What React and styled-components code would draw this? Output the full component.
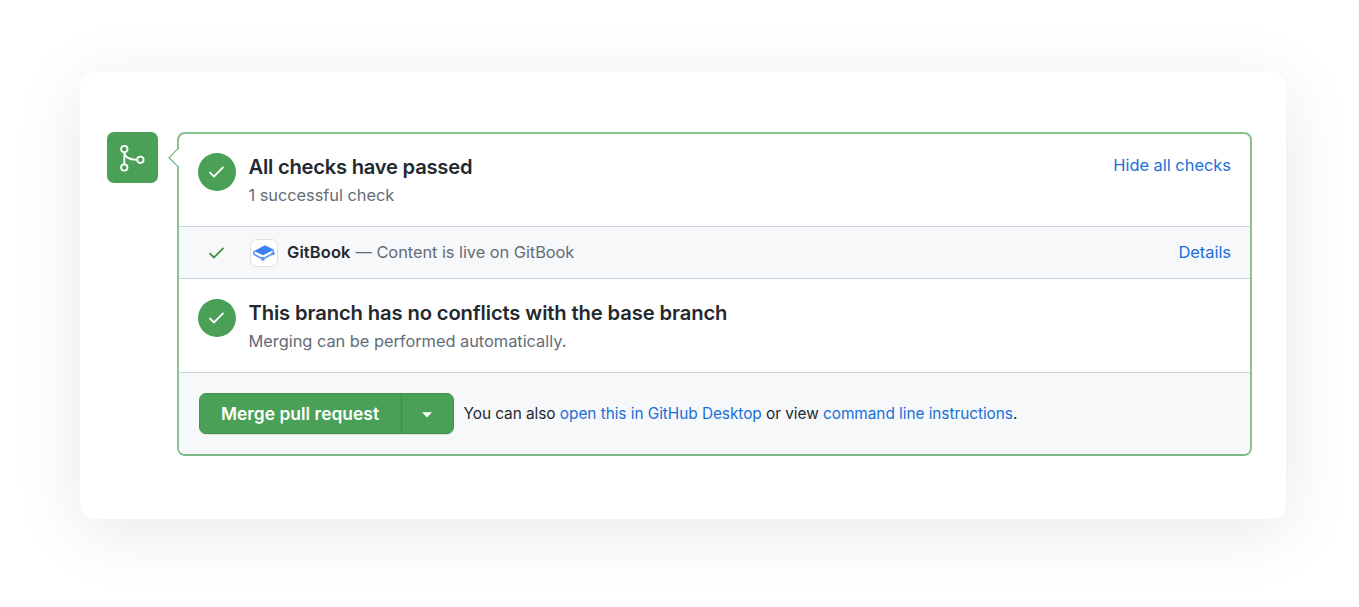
import React from 'react';
import styled, { createGlobalStyle } from 'styled-components';

const green = '#4aa057';

const GlobalStyle = createGlobalStyle`
  * { box-sizing: border-box; }
  body {
    margin: 0;
    background: #fff;
    color: #24292f;
    font-family: Inter, "Liberation Sans", sans-serif;
    overflow: hidden;
  }
`;

const Page = styled.main`
  width: 1359px;
  height: 607px;
  padding: 72px 73px 88px 80px;
  overflow: hidden;
`;

const Card = styled.section`
  display: flex;
  align-items: flex-start;
  gap: 19px;
  height: 447px;
  padding: 60px 34px 0 27px;
  border-radius: 15px;
  background: #fff;
  box-shadow: 0 12px 70px rgba(0, 0, 0, 0.093);
`;

const MergeBadge = styled.div`
  display: flex;
  align-items: center;
  justify-content: center;
  width: 51px;
  height: 51px;
  padding: 0 2px 0 0;
  flex: none;
  border-radius: 7px;
  background: ${green};
`;

const Panel = styled.div`
  position: relative;
  flex: 1;
  height: 324px;
  display: flex;
  flex-direction: column;
  border: 2px solid #88c391;
  border-bottom-color: #7cb986;
  border-radius: 8px;
`;

const Caret = styled.svg`
  position: absolute;
  left: -11px;
  top: 13px;
`;

const Row = styled.div`
  display: flex;
  align-items: ${(p) => p.$align || 'flex-start'};
  height: ${(p) => p.$height}px;
  padding: ${(p) => p.$padding};
  background: ${(p) => (p.$shaded ? '#f6f8fa' : 'transparent')};
  border-top: ${(p) => (p.$divided ? '1px solid #ccd3db' : '0')};
  border-radius: ${(p) => (p.$last ? '0 0 6px 6px' : '0')};
`;

const StatusCircle = styled.div`
  display: flex;
  align-items: center;
  justify-content: center;
  width: 38.5px;
  height: 38.5px;
  flex: none;
  margin-right: 12.5px;
  border-radius: 50%;
  background: ${green};
`;

const Summary = styled.div`
  flex: 1;
  white-space: nowrap;
`;

const Title = styled.h3`
  margin: 0;
  font-size: 20.2px;
  line-height: 28px;
  font-weight: 600;
  letter-spacing: ${(p) => p.$tracking || 0}px;
`;

const Text = styled.span`
  display: ${(p) => (p.$block ? 'block' : 'inline')};
  font-size: ${(p) => p.$size || 16.4}px;
  line-height: 28px;
  font-weight: ${(p) => (p.$strong ? 600 : 400)};
  color: ${(p) => (p.$muted ? '#636c76' : '#24292f')};
  letter-spacing: ${(p) => p.$tracking || 0}px;
  white-space: nowrap;
`;

const Link = styled.a`
  font-size: ${(p) => p.$size || 16.4}px;
  line-height: 24px;
  color: #1a6fd8;
  white-space: nowrap;
`;

const CheckSlot = styled.div`
  display: flex;
  justify-content: center;
  width: 38px;
  margin-right: 15px;
`;

const AppTile = styled.div`
  display: flex;
  align-items: center;
  justify-content: center;
  width: 28px;
  height: 28px;
  margin-right: 9px;
  border: 1px solid #dcdfe3;
  border-radius: 7px;
  background: #fff;
`;

const CheckLabel = styled.div`
  display: flex;
  flex: 1;
  gap: 5px;
  padding-bottom: 2px;
`;

const DetailsCell = styled.div`
  padding-bottom: 2px;
`;

const ButtonGroup = styled.div`
  display: flex;
  width: 255px;
  height: 41px;
  margin-right: 10px;
  flex: none;
  border: 1px solid #44924f;
  border-radius: 7px;
  background: ${green};
  box-shadow: 0 1px 0 rgba(27, 31, 36, 0.1);
`;

const MergeButton = styled.button`
  width: 202px;
  padding: 0;
  border: 0;
  border-right: 1px solid #3f8c4a;
  background: transparent;
  color: #fff;
  font: 600 17.4px/39px Inter, "Liberation Sans", sans-serif;
  letter-spacing: 0.03px;
  white-space: nowrap;
`;

const MenuButton = styled.button`
  display: flex;
  align-items: center;
  justify-content: center;
  flex: 1;
  padding: 2px 0 0;
  border: 0;
  background: transparent;
`;

const Check = ({ color = '#fff' }) => (
  <svg width="17" height="13" viewBox="0 0 17 13" fill="none">
    <path d="M1.5 7.2 6 11.5 15.5 1.8" stroke={color} strokeWidth="1.8" />
  </svg>
);

const MergeIcon = () => (
  <svg width="28" height="30" viewBox="0 0 28 30" fill="none" stroke="#fff" strokeWidth="1.8">
    <circle cx="6.3" cy="6" r="3.2" />
    <circle cx="6.3" cy="24.5" r="3.2" />
    <circle cx="22.4" cy="16.8" r="3.2" />
    <path d="M6.3 9.2V21.3M6.3 9.2C6.7 13.9 10.8 16.8 19.2 16.8" />
  </svg>
);

const BookIcon = () => (
  <svg width="22" height="16" viewBox="0 0 22 16" fill="none">
    <path d="M1 6 12 .3 21 4.7 10 10.2Z" fill="#3b82f0" />
    <path d="M1.3 6.2C.4 8 .8 9.2 2.2 10L9.8 14 20 8.5" stroke="#5e96ee" strokeWidth="1.7" />
    <path d="M20.3 4.8V8" stroke="#5e96ee" strokeWidth="1.2" />
    <circle cx="9.9" cy="13.8" r="2" fill="#5e96ee" />
    <circle cx="20" cy="8.4" r="1.8" fill="#5e96ee" />
  </svg>
);

export default function App() {
  return (
    <>
      <GlobalStyle />
      <Page>
        <Card>
          <MergeBadge><MergeIcon /></MergeBadge>
          <Panel>
            <Caret width="12" height="22" viewBox="0 0 12 22">
              <path d="M11.5 1V20.5L1 10.7Z" fill="#fff" />
              <path d="M10.5 1.2 1 10.7 10.5 20.2" fill="none" stroke="#72b77d" strokeWidth="1.2" />
            </Caret>
            <Row $height={92} $padding="18.5px 19px 0 18.5px">
              <StatusCircle><Check /></StatusCircle>
              <Summary>
                <Title $tracking={-0.24}>All checks have passed</Title>
                <Text $block $muted $tracking={-0.04}>1 successful check</Text>
              </Summary>
              <Link>Hide all checks</Link>
            </Row>
            <Row $height={52} $align="center" $padding="0 19px 0 18px" $shaded $divided>
              <CheckSlot><Check color="#3d9149" /></CheckSlot>
              <AppTile><BookIcon /></AppTile>
              <CheckLabel>
                <Text $strong $tracking={0.15}>GitBook</Text>
                <Text $muted $tracking={-0.05}>— Content is live on GitBook</Text>
              </CheckLabel>
              <DetailsCell><Link>Details</Link></DetailsCell>
            </Row>
            <Row $height={94} $padding="19.5px 19px 0 18.5px" $divided>
              <StatusCircle><Check /></StatusCircle>
              <Summary>
                <Title $tracking={-0.12}>This branch has no conflicts with the base branch</Title>
                <Text $block $muted $tracking={-0.03}>Merging can be performed automatically.</Text>
              </Summary>
            </Row>
            <Row $height={82} $align="center" $padding="0 19px 0 19.5px" $shaded $divided $last>
              <ButtonGroup>
                <MergeButton>Merge pull request</MergeButton>
                <MenuButton aria-label="Merge options">
                  <svg width="10" height="6" viewBox="0 0 10 6"><path d="M0 .3H10L5 5.6Z" fill="#fff" /></svg>
                </MenuButton>
              </ButtonGroup>
              <Text $size={15.4} $tracking={-0.05}>
                You can also <Link $size={15.4}>open this in GitHub Desktop</Link> or view{' '}
                <Link $size={15.4}>command line instructions</Link>.
              </Text>
            </Row>
          </Panel>
        </Card>
      </Page>
    </>
  );
}
